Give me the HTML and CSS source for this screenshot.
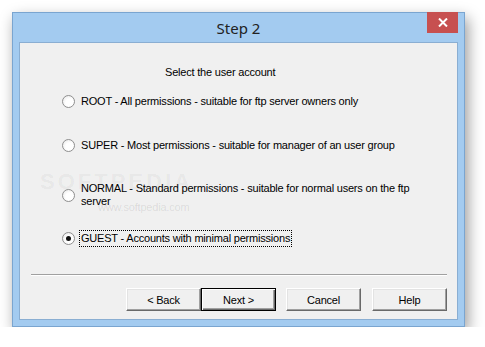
FILE: index.html
```html
<!DOCTYPE html>
<html lang="en">
  <head>
    <meta charset="UTF-8" />
    <meta name="viewport" content="width=device-width, initial-scale=1.0" />
    <title>Step 2</title>
    <link rel="stylesheet" href="styles.css">
  </head>
  <body>
    <div class="window">
      <div class="titlebar">
        <span class="title">Step 2</span>
        <span class="close">
          <svg width="10" height="9" viewBox="0 0 10 9">
            <path d="M1 0.5 L9 8.5 M9 0.5 L1 8.5" stroke="#fff" stroke-width="2" fill="none" />
          </svg>
        </span>
      </div>
      <div class="client">
        <div class="watermark">
          <span class="wm-big">SOFTPEDIA</span>
          <span class="wm-small">www.softpedia.com</span>
        </div>
        <p class="heading">Select the user account</p>
        <div class="options">
          <label class="option opt-root">
            <span class="radio"></span>
            <span class="label">ROOT - All permissions - suitable for ftp server owners only</span>
          </label>
          <label class="option opt-super">
            <span class="radio"></span>
            <span class="label">SUPER - Most permissions - suitable for manager of an user group</span>
          </label>
          <label class="option opt-normal">
            <span class="radio"></span>
            <span class="label">NORMAL - Standard permissions - suitable for normal users on the ftp<br>server</span>
          </label>
          <label class="option opt-guest">
            <span class="radio checked"></span>
            <span class="label focused">GUEST - Accounts with minimal permissions</span>
          </label>
        </div>
        <div class="separator"></div>
        <div class="buttons">
          <button class="btn">&lt; Back</button>
          <button class="btn default">Next &gt;</button>
          <button class="btn cancel">Cancel</button>
          <button class="btn help">Help</button>
        </div>
      </div>
    </div>
  </body>
</html>
```

FILE: styles.css
```css
html,
body {
  margin: 0;
  padding: 0;
}

body {
  background: #fff;
  padding: 12px 0 0 12px;
  font-family: "Liberation Sans", Arial, sans-serif;
}

.window {
  display: flex;
  flex-direction: column;
  padding: 0 6px 6px;
  width: 439px;
  height: 307px;
  background: #a3cbf0;
  border: 1px solid #7aa5d0;
  box-shadow: 3px 6px 14px rgba(0, 0, 0, 0.4);
}

.titlebar {
  flex: none;
  height: 29px;
  display: grid;
  grid-template-columns: 1fr auto 1fr;
  align-items: center;
}

.title {
  grid-column: 2;
  font-family: "Noto Sans", "Open Sans", sans-serif;
  font-size: 15px;
  color: #222;
  padding-top: 1px;
}

.close {
  grid-column: 3;
  justify-self: end;
  align-self: start;
  margin-top: -1px;
  width: 31px;
  height: 21px;
  background: #c75050;
  display: flex;
  align-items: center;
  justify-content: center;
}

.close svg {
  display: block;
}

.client {
  position: relative;
  flex: 1;
  background: #f0f0f0;
  border: 1px solid #8aaed2;
  padding-top: 23px;
  font-size: 11px;
  line-height: 13px;
  letter-spacing: -0.2px;
  color: #000;
}

.heading {
  margin: 0 0 0 145px;
}

.options {
  display: flex;
  flex-direction: column;
  padding-left: 42px;
  margin-top: 14px;
}

.option {
  display: flex;
  align-items: center;
  min-height: 17px;
}

.opt-super {
  margin-top: 27px;
}

.opt-normal {
  margin-top: 26px;
  min-height: 28px;
}

.opt-guest {
  margin-top: 20px;
}

.radio {
  width: 11px;
  height: 11px;
  border-radius: 50%;
  border: 1px solid #8f8f8f;
  background: radial-gradient(circle at 60% 60%, #fff 40%, #e4e4e4 100%);
  margin-right: 4px;
  position: relative;
  flex: none;
}

.radio.checked::after {
  content: "";
  position: absolute;
  left: 3px;
  top: 3px;
  width: 5px;
  height: 5px;
  border-radius: 50%;
  background: #111;
}

.label {
  padding: 1px 1px;
  border: 1px dotted transparent;
}

.label.focused {
  border-color: #000;
}

.separator {
  margin: 27px 0 0 11px;
  width: 416px;
  border-top: 1px solid #a0a0a0;
  border-bottom: 1px solid #fff;
}

.buttons {
  display: flex;
  padding-left: 106px;
  margin-top: 12px;
}

.btn {
  width: 75px;
  height: 23px;
  padding: 0;
  font-family: "Liberation Sans", Arial, sans-serif;
  font-size: 11px;
  letter-spacing: -0.2px;
  color: #000;
  background: #f0f0f0;
  border: 1px solid;
  border-color: #fff #696969 #696969 #fff;
  box-shadow: inset -1px -1px #a0a0a0, inset 1px 1px #e3e3e3;
  border-radius: 0;
}

.btn.default {
  border: 1px solid #000;
  box-shadow: inset 1px 1px #fff, inset -1px -1px #696969, inset -2px -2px #a0a0a0;
}

.btn.cancel {
  margin-left: 10px;
}

.btn.help {
  margin-left: 11px;
}

.watermark {
  position: absolute;
  left: 20px;
  top: 128px;
  color: rgba(0, 0, 0, 0.05);
  pointer-events: none;
}

.wm-big {
  display: block;
  font-size: 22px;
  line-height: 22px;
  letter-spacing: 3px;
  font-weight: bold;
}

.wm-small {
  display: block;
  margin: 8px 0 0 58px;
  font-size: 11px;
  color: rgba(0, 0, 0, 0.1);
}
```
